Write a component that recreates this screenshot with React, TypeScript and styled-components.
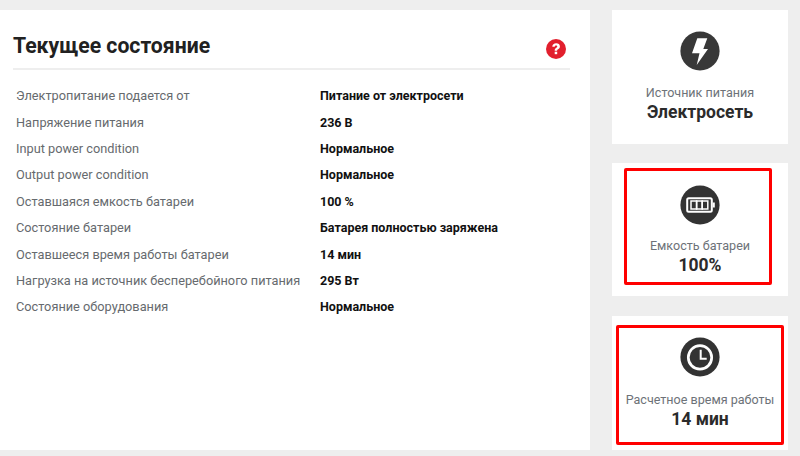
import React from "react";
import styled, { createGlobalStyle } from "styled-components";

const Global = createGlobalStyle`
  html, body { margin: 0; padding: 0; background: #eeeeee; }
  body { font-family: Roboto, "Liberation Sans", sans-serif; }
`;

const Page = styled.div`
  width: 800px;
  height: 456px;
  overflow: hidden;
  box-sizing: border-box;
  padding: 10px 12px 0 0;
  display: grid;
  grid-template-columns: 590px 176px;
  column-gap: 22px;
`;

const Panel = styled.section`
  height: 440px;
  background: #fff;
  box-sizing: border-box;
  padding: 0 20px 0 13px;
`;

const Header = styled.header`
  height: 58px;
  border-bottom: 2px solid #eeeeee;
  display: flex;
  align-items: flex-end;
  justify-content: space-between;
  padding-right: 4px;
`;

const Title = styled.h2`
  margin: 0 0 9px;
  font-size: 21.2px;
  line-height: 26px;
  font-weight: 700;
  color: #212121;
`;

const HelpIcon = styled.svg`
  width: 20px;
  height: 20px;
  margin-bottom: 9px;
`;

const Rows = styled.dl`
  margin: 12.5px 0 0;
  padding-left: 3px;
  display: grid;
  grid-template-columns: 304px 1fr;
  grid-auto-rows: 26.4px;
  align-items: center;
  font-size: 12.75px;
`;

const Label = styled.dt`
  color: #666a6e;
`;

const Value = styled.dd`
  margin: 0;
  font-weight: 700;
  color: #111;
  font-size: 12.5px;
`;

const Side = styled.aside`
  display: flex;
  flex-direction: column;
`;

const Card = styled.div<{ $h: number; $top: number; $pad: number }>`
  position: relative;
  height: ${(p) => p.$h}px;
  margin-top: ${(p) => p.$top}px;
  background: #fff;
  display: flex;
  flex-direction: column;
  align-items: center;
  box-sizing: border-box;
  padding-top: ${(p) => p.$pad}px;
`;

const Frame = styled.div<{ $l: number; $t: number; $r: number; $b: number }>`
  position: absolute;
  left: ${(p) => p.$l}px;
  top: ${(p) => p.$t}px;
  right: ${(p) => p.$r}px;
  bottom: ${(p) => p.$b}px;
  border: 3px solid #ff0000;
  border-radius: 2px;
`;

const Badge = styled.svg`
  width: 40px;
  height: 40px;
  display: block;
`;

const CardLabel = styled.div<{ $gap: number }>`
  margin-top: ${(p) => p.$gap}px;
  font-size: 12.55px;
  line-height: 18px;
  color: #6d7278;
  white-space: nowrap;
`;

const CardValue = styled.div`
  margin-top: -1px;
  font-size: 17.5px;
  line-height: 22px;
  font-weight: 700;
  color: #2b2b2b;
  white-space: nowrap;
`;

const rows: [string, string][] = [
  ["Электропитание подается от", "Питание от электросети"],
  ["Напряжение питания", "236 В"],
  ["Input power condition", "Нормальное"],
  ["Output power condition", "Нормальное"],
  ["Оставшаяся емкость батареи", "100 %"],
  ["Состояние батареи", "Батарея полностью заряжена"],
  ["Оставшееся время работы батареи", "14 мин"],
  ["Нагрузка на источник бесперебойного питания", "295 Вт"],
  ["Состояние оборудования", "Нормальное"],
];

const Bolt = () => (
  <Badge viewBox="0 0 40 40">
    <circle cx="20" cy="20" r="19.6" fill="#383838" />
    <path d="M17.3 7.3H27.3L23.3 18H28L16.7 34L19.5 22.3H12z" fill="#fff" />
  </Badge>
);

const Battery = () => (
  <Badge viewBox="0 0 40 40">
    <circle cx="20" cy="20" r="19.6" fill="#333" />
    <rect x="7.2" y="13.2" width="24.6" height="13.6" rx="1.5" fill="none" stroke="#fff" strokeWidth="2" />
    <rect x="32.6" y="17.5" width="2.2" height="5" fill="#fff" />
    <rect x="11" y="16" width="5.6" height="8" fill="none" stroke="#fff" strokeWidth="1.5" />
    <rect x="16.6" y="16" width="5.6" height="8" fill="none" stroke="#fff" strokeWidth="1.5" />
    <rect x="22.2" y="16" width="5.6" height="8" fill="none" stroke="#fff" strokeWidth="1.5" />
  </Badge>
);

const Clock = () => (
  <Badge viewBox="0 0 40 40">
    <circle cx="20" cy="20" r="19.6" fill="#333" />
    <circle cx="20" cy="20.4" r="11.7" fill="none" stroke="#fff" strokeWidth="2.7" />
    <path d="M20.7 12.7V21.7H26.7" fill="none" stroke="#fff" strokeWidth="2" />
  </Badge>
);

export default function App() {
  return (
    <Page>
      <Global />
      <Panel>
        <Header>
          <Title>Текущее состояние</Title>
          <HelpIcon viewBox="0 0 20 20">
            <circle cx="10" cy="10" r="10" fill="#e21f2d" />
            <path
              d="M6.3 7.8C6.3 5.6 8 4.3 10.2 4.3c2.2 0 3.7 1.2 3.7 3.1 0 1.4-.8 2.1-1.8 2.8-.8.5-1 .8-1 1.6H8.7c0-1.4.4-2.1 1.3-2.7.8-.6 1.3-1 1.3-1.6 0-.7-.5-1.1-1.2-1.1-.8 0-1.3.5-1.4 1.4z"
              fill="#fff"
            />
            <rect x="8.7" y="12.7" width="2.5" height="2.5" fill="#fff" />
          </HelpIcon>
        </Header>
        <Rows>
          {rows.map(([k, v]) => (
            <React.Fragment key={k}>
              <Label>{k}</Label>
              <Value>{v}</Value>
            </React.Fragment>
          ))}
        </Rows>
      </Panel>
      <Side>
        <Card $h={134} $top={0} $pad={21}>
          <Bolt />
          <CardLabel $gap={13}>Источник питания</CardLabel>
          <CardValue>Электросеть</CardValue>
        </Card>
        <Card $h={133} $top={19} $pad={22}>
          <Battery />
          <CardLabel $gap={12}>Емкость батареи</CardLabel>
          <CardValue>100%</CardValue>
          <Frame $l={12} $t={5} $r={16} $b={11} />
        </Card>
        <Card $h={134} $top={20} $pad={21}>
          <Clock />
          <CardLabel $gap={14}>Расчетное время работы</CardLabel>
          <CardValue>14 мин</CardValue>
          <Frame $l={4} $t={9} $r={4} $b={5} />
        </Card>
      </Side>
    </Page>
  );
}
